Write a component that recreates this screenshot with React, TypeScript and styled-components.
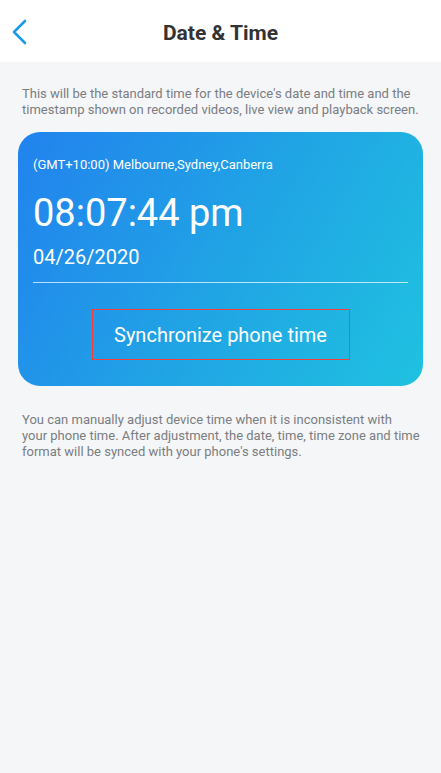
import React from "react";
import styled, { createGlobalStyle } from "styled-components";

const GlobalStyle = createGlobalStyle`
  html, body {
    margin: 0;
    padding: 0;
    background: #f5f6f8;
    font-family: Roboto, "Noto Sans", sans-serif;
  }
`;

const App = () => {
  return (
    <Page>
      <GlobalStyle />
      <Header>
        <BackButton>
          <svg width="16" height="26" viewBox="0 0 16 26" fill="none">
            <path d="M14 2 L3 13 L14 24" stroke="#1a9be8" strokeWidth="2.6" strokeLinecap="round" strokeLinejoin="round" />
          </svg>
        </BackButton>
        <Title>Date &amp; Time</Title>
      </Header>
      <Content>
        <Note>
          This will be the standard time for the device's date and time and the
          timestamp shown on recorded videos, live view and playback screen.
        </Note>
        <Card>
          <Zone>(GMT+10:00) Melbourne,Sydney,Canberra</Zone>
          <Clock>08:07:44 pm</Clock>
          <DateText>04/26/2020</DateText>
          <Divider />
          <SyncRow>
            <SyncButton>Synchronize phone time</SyncButton>
          </SyncRow>
        </Card>
        <Note $top={26}>
          You can manually adjust device time when it is inconsistent with
          <br />
          your phone time. After adjustment, the date, time, time zone and time
          <br />
          format will be synced with your phone's settings.
        </Note>
      </Content>
    </Page>
  );
};

const Page = styled.div`
  width: 441px;
  min-height: 773px;
  background: #f5f6f8;
`;

const Header = styled.div`
  position: relative;
  height: 62px;
  background: #ffffff;
  display: flex;
  align-items: center;
  justify-content: center;
`;

const BackButton = styled.div`
  position: absolute;
  left: 11px;
  top: 19px;
  width: 16px;
  height: 26px;
`;

const Title = styled.div`
  font-size: 21px;
  font-weight: 700;
  color: #333333;
  margin-top: 4px;
`;

const Content = styled.div`
  padding: 24px 18px 0 18px;
  display: flex;
  flex-direction: column;
`;

const Note = styled.p<{ $top?: number }>`
  margin: ${(p) => p.$top || 0}px 0 0 4px;
  max-width: 401px;
  font-size: 13px;
  line-height: 16px;
  color: #7a7d82;
`;

const Card = styled.div`
  margin-top: 14px;
  height: 254px;
  box-sizing: border-box;
  border-radius: 22px;
  padding: 24px 15px 0 15px;
  background: linear-gradient(120deg, #2282ee 0%, #20a6e4 55%, #1fc2e0 100%);
  color: #ffffff;
  display: flex;
  flex-direction: column;
`;

const Zone = styled.div`
  font-size: 13px;
  line-height: 18px;
`;

const Clock = styled.div`
  font-size: 38px;
  line-height: 44px;
  margin-top: 17px;
`;

const DateText = styled.div`
  font-size: 20px;
  line-height: 24px;
  margin-top: 10px;
`;

const Divider = styled.div`
  height: 1px;
  background: rgba(255, 255, 255, 0.7);
  margin-top: 13px;
`;

const SyncRow = styled.div`
  display: flex;
  justify-content: center;
  margin-top: 26px;
`;

const SyncButton = styled.div`
  width: 258px;
  height: 51px;
  box-sizing: border-box;
  border: 1px solid #f2403c;
  display: flex;
  align-items: center;
  justify-content: center;
  font-size: 20px;
  color: #ffffff;
`;

export default App;
